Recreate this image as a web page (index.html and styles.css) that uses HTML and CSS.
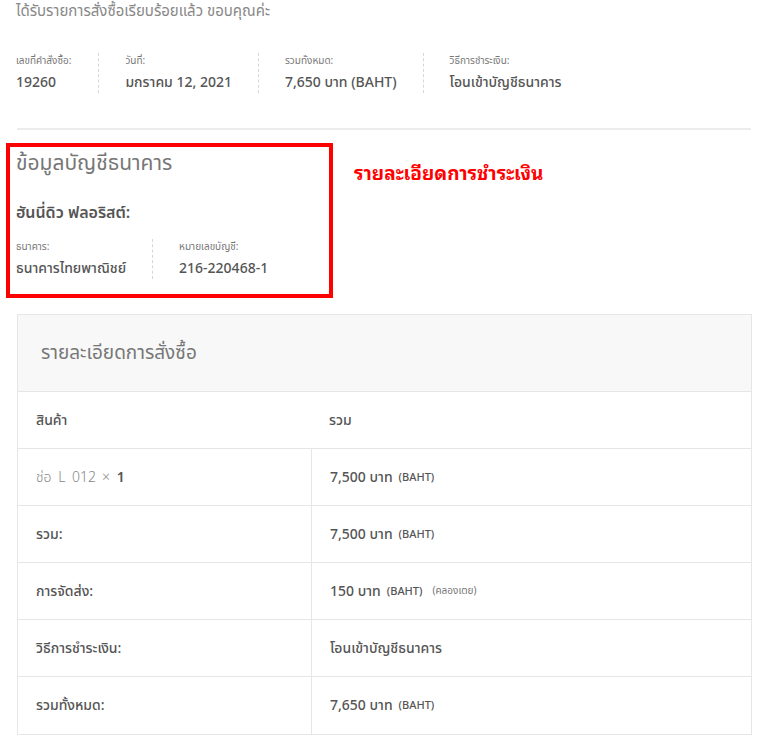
FILE: index.html
```html
<!DOCTYPE html>
<html lang="th">
<head>
<meta charset="utf-8">
<title>คำสั่งซื้อ</title>
<link rel="stylesheet" href="styles.css">
</head>
<body>
<div class="page">
  <p class="thanks">ได้รับรายการสั่งซื้อเรียบร้อยแล้ว ขอบคุณค่ะ</p>

  <ul class="overview">
    <li class="ov-item"><span class="ov-label">เลขที่คำสั่งซื้อ:</span><strong class="ov-value">19260</strong></li>
    <li class="ov-item"><span class="ov-label">วันที่:</span><strong class="ov-value">มกราคม 12, 2021</strong></li>
    <li class="ov-item"><span class="ov-label">รวมทั้งหมด:</span><strong class="ov-value">7,650 บาท (BAHT)</strong></li>
    <li class="ov-item"><span class="ov-label">วิธีการชำระเงิน:</span><strong class="ov-value">โอนเข้าบัญชีธนาคาร</strong></li>
  </ul>

  <div class="rule"></div>

  <div class="bank-row">
    <section class="bank-box">
      <h2 class="bank-title">ข้อมูลบัญชีธนาคาร</h2>
      <h3 class="bank-name">ฮันนี่ดิว ฟลอริสต์:</h3>
      <ul class="bank-details">
        <li class="bd-item"><span class="ov-label">ธนาคาร:</span><strong class="ov-value">ธนาคารไทยพาณิชย์</strong></li>
        <li class="bd-item"><span class="ov-label">หมายเลขบัญชี:</span><strong class="ov-value">216-220468-1</strong></li>
      </ul>
    </section>
    <p class="note">รายละเอียดการชำระเงิน</p>
  </div>

  <section class="order">
    <h2 class="order-title">รายละเอียดการสั่งซื้อ</h2>
    <div class="row head">
      <div class="cell">สินค้า</div>
      <div class="cell">รวม</div>
    </div>
    <div class="row">
      <div class="cell light">ช่อ L 012 <span class="qty">× <b>1</b></span></div>
      <div class="cell split">7,500 บาท <small>(BAHT)</small></div>
    </div>
    <div class="row">
      <div class="cell">รวม:</div>
      <div class="cell split">7,500 บาท <small>(BAHT)</small></div>
    </div>
    <div class="row">
      <div class="cell">การจัดส่ง:</div>
      <div class="cell split">150 บาท <small>(BAHT)</small> <small class="via">(คลองเตย)</small></div>
    </div>
    <div class="row">
      <div class="cell">วิธีการชำระเงิน:</div>
      <div class="cell split">โอนเข้าบัญชีธนาคาร</div>
    </div>
    <div class="row last">
      <div class="cell">รวมทั้งหมด:</div>
      <div class="cell split">7,650 บาท <small>(BAHT)</small></div>
    </div>
  </section>
</div>
</body>
</html>
```

FILE: styles.css
```css
* { box-sizing: border-box; }
html, body { margin: 0; padding: 0; background: #fff; }
body {
  font-family: "Noto Sans Thai", "Noto Sans", "Liberation Sans", sans-serif;
  color: #666;
  font-size: 14px;
}
.page { padding: 0 16px 0 16px; width: 768px; }

.thanks {
  margin: 0;
  padding-top: 1px;
  font-size: 15px;
  line-height: 22px;
  color: #888;
}

.overview {
  list-style: none;
  margin: 30px 0 0 0;
  padding: 0;
  display: flex;
}
.ov-item {
  display: flex;
  flex-direction: column;
  padding: 0 26px;
  border-right: 1px dashed #d6d6d6;
}
.ov-item:first-child { padding-left: 0; padding-right: 27px; }
.ov-item:last-child { border-right: 0; }
.ov-label {
  font-size: 10px;
  line-height: 16px;
  color: #777;
  margin-bottom: 4px;
}
.ov-value {
  font-size: 14px;
  line-height: 20px;
  font-weight: 500;
  color: #555;
}

.rule {
  margin: 35px 1px 0 1px;
  height: 2px;
  background: #ececec;
}

.bank-row {
  display: flex;
  align-items: flex-start;
  margin: 13px 0 0 -10px;
}
.bank-box {
  width: 327px;
  border: 4px solid #ff0000;
  padding: 2px 6px 15px 6px;
}
.bank-title {
  margin: 0;
  font-size: 21px;
  font-weight: 400;
  line-height: 30px;
  color: #777;
}
.bank-name {
  margin: 22px 0 0 0;
  font-size: 16px;
  font-weight: 600;
  line-height: 24px;
  color: #555;
}
.bank-details {
  list-style: none;
  margin: 14px 0 0 0;
  padding: 0;
  display: flex;
}
.bd-item {
  display: flex;
  flex-direction: column;
  padding: 0 26px;
  border-right: 1px dashed #d6d6d6;
}
.bd-item:first-child { padding-left: 0; }
.bd-item:last-child { border-right: 0; }

.note {
  margin: 17px 0 0 21px;
  font-family: "Noto Sans Thai Looped", "Noto Sans Thai", sans-serif;
  font-size: 19px;
  line-height: 24px;
  font-weight: 700;
  color: #ff0000;
}

.order {
  margin: 16px 0 0 1px;
  width: 735px;
  border: 1px solid #e6e6e6;
}
.order-title {
  margin: 0;
  height: 77px;
  padding: 0 0 0 23px;
  display: flex;
  align-items: center;
  background: #f8f8f8;
  border-bottom: 1px solid #e6e6e6;
  font-size: 19px;
  font-weight: 400;
  color: #777;
}
.row {
  display: grid;
  grid-template-columns: 293px 1fr;
  height: 57px;
  border-bottom: 1px solid #e6e6e6;
}
.row.last { border-bottom: 0; }
.cell {
  display: flex;
  align-items: center;
  padding: 0 18px;
  font-size: 14px;
  font-weight: 500;
  color: #555;
  gap: 4px;
}
.cell.split { border-left: 1px solid #e6e6e6; }
.cell small { font-size: 11px; font-weight: 500; margin-left: 2px; }
.cell small.via { font-weight: 400; font-size: 10px; margin-left: 6px; color: #777; }
.cell.light { font-weight: 300; color: #888; word-spacing: 3px; }
.qty { margin-left: 2px; }
.qty b { font-weight: 600; color: #555; }
```
